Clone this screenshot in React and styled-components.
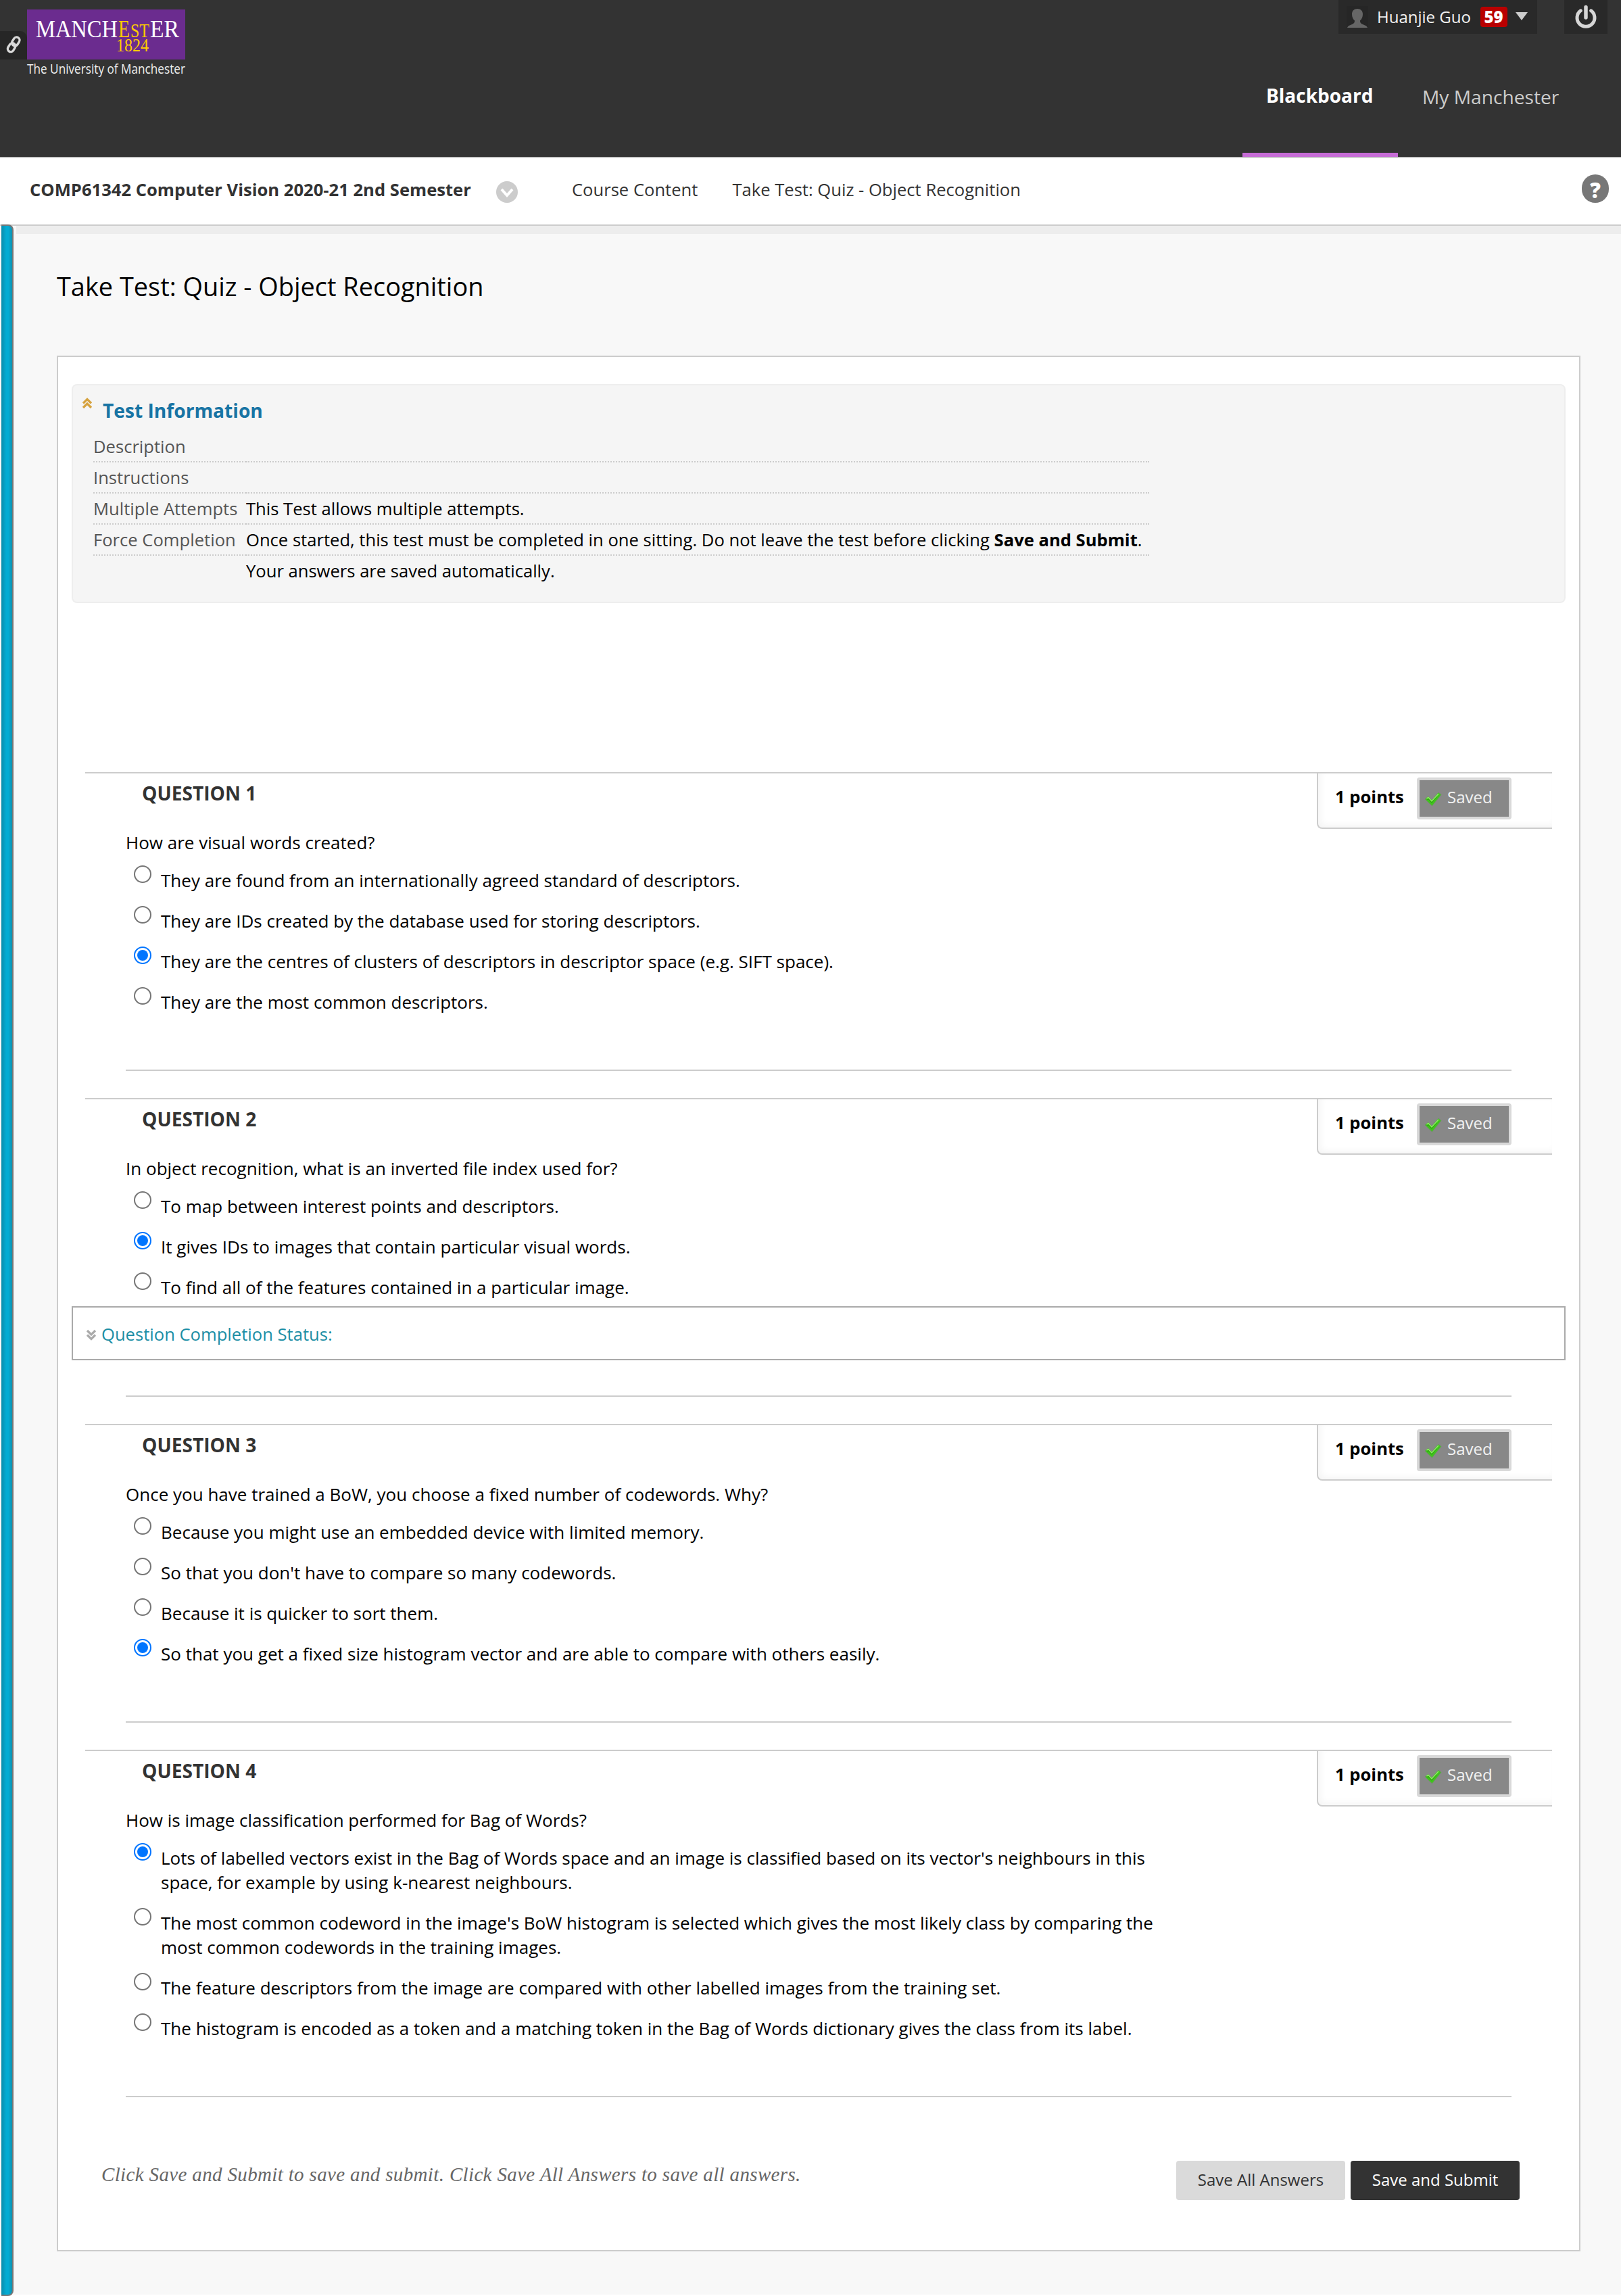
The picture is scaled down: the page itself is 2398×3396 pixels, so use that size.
import React from 'react';
import styled, { createGlobalStyle } from 'styled-components';

const GlobalStyle = createGlobalStyle`
  * { box-sizing: border-box; }
  body {
    margin: 0;
    background: #fff;
    color: #000;
    font-family: "Open Sans", "Noto Sans", sans-serif;
    font-size: 25.6px;
    line-height: 36px;
  }
  svg { display: block; flex: none; }
`;

const Page = styled.div`
  width: 2398px;
  height: 3396px;
  display: flex;
  flex-direction: column;
  overflow: hidden;
`;

/* ---------- global header ---------- */

const Header = styled.header`
  height: 234px;
  display: flex;
  justify-content: space-between;
  background: #333;
  border-bottom: 2px solid #ccc;
`;

const Brand = styled.div`
  display: flex;
  align-items: flex-start;
`;

const LinkTab = styled.div`
  width: 40px;
  height: 42px;
  margin-top: 46px;
  padding: 6px 0 0 8px;
  background: #262626;
  border-top-right-radius: 10px;
`;

const Logo = styled.svg`
  margin-top: 14px;
  overflow: visible;
`;

const HeaderSide = styled.div`
  display: flex;
  flex-direction: column;
  align-items: flex-end;
`;

const Utilities = styled.div`
  display: flex;
  gap: 40px;
  height: 50px;
  margin-right: 20px;
`;

const UserMenu = styled.div`
  display: flex;
  align-items: center;
  width: 294px;
  padding-left: 12px;
  background: #292929;
  color: #f2f2f2;
  font-size: 24px;
`;

const UserName = styled.span`
  width: 147px;
  margin-left: 13px;
  white-space: nowrap;
`;

const Badge = styled.span`
  width: 40px;
  height: 30px;
  margin: 0 11px 0 6px;
  padding-right: 1px;
  border-radius: 4px;
  background: #b90000;
  color: #fff;
  font-weight: 800;
  line-height: 30px;
  text-align: center;
`;

const Caret = styled.svg`
  margin-top: -2px;
`;

const PowerButton = styled.div`
  display: flex;
  justify-content: center;
  width: 64px;
  padding-top: 6px;
  padding-right: 1px;
  background: #292929;
`;

const Nav = styled.nav`
  display: flex;
  height: 182px;
  margin-right: 56px;
`;

const NavTab = styled.a`
  width: ${(p) => (p.$active ? 230 : 274)}px;
  padding: ${(p) => (p.$active ? '73px 0 0 35px' : '75px 0 0 36px')};
  border-bottom: 6px solid ${(p) => (p.$active ? '#c66cd6' : 'transparent')};
  color: ${(p) => (p.$active ? '#fff' : '#ccc')};
  font-size: ${(p) => (p.$active ? 28 : 28.16)}px;
  font-weight: ${(p) => (p.$active ? 700 : 400)};
  white-space: nowrap;
`;

/* ---------- breadcrumbs ---------- */

const Crumbs = styled.div`
  display: flex;
  align-items: flex-start;
  height: 100px;
  padding: 28px 18px 0 44px;
  background: #fff;
  border-bottom: 2px solid #ccc;
  color: #333;
  line-height: 38px;
  white-space: nowrap;
`;

const CourseName = styled.span`
  width: 690px;
  font-weight: 700;
`;

const Crumb = styled.span`
  margin-left: ${(p) => p.$gap}px;
`;

const HelpBadge = styled.span`
  width: 40px;
  height: 42px;
  margin: -4px 0 0 auto;
  border-radius: 20px;
  background: #777;
  color: #fff;
  font-size: 31px;
  font-weight: 800;
  line-height: 46px;
  text-align: center;
`;

/* ---------- page body ---------- */

const Body = styled.main`
  display: flex;
  flex: 1;
  padding: 0 0 2px 2px;
  background: linear-gradient(#f8f8f8, #f8f8f8) no-repeat 0 0 / 100% 3060px;
`;

const CourseMenuEdge = styled.div`
  width: 18px;
  margin-top: -2px;
  margin-bottom: -2px;
  border: 1px solid #777;
  border-width: 2px 2px 2px 0;
  border-radius: 0 8px 8px 0;
  background: linear-gradient(90deg, #0b8cab 0, #04abd3 45%, #04abd3 65%, #1290ae 100%);
`;

const Content = styled.div`
  flex: 1;
  margin-left: 4px;
  padding: 62px 60px 0;
  border-top: 12px solid #ededed;
`;

const Title = styled.h1`
  height: 118px;
  margin: 0;
  font-size: 37.9px;
  font-weight: 400;
  line-height: 30px;
`;

const Panel = styled.section`
  position: relative;
  height: 2804px;
  padding: 40px 20px 0;
  border: 2px solid #ccc;
  background: #fff;
`;

const Info = styled.div`
  height: 324px;
  margin-bottom: 250px;
  padding: 18px 14px 0 13px;
  border: 2px solid #eee;
  border-radius: 8px;
  background: #f5f5f5;
`;

const InfoHeading = styled.div`
  display: flex;
  gap: 15px;
  height: 50px;
  color: #1874a4;
  font-size: 28.16px;
  font-weight: 700;
  line-height: 39px;
`;

const InfoTable = styled.div`
  display: grid;
  grid-template-columns: 226px 1336px;
  margin-left: 17px;
  line-height: 38px;
  white-space: nowrap;
`;

const InfoLabel = styled.div`
  height: 46px;
  padding-top: 4px;
  border-bottom: 2px ${(p) => (p.$last ? 'none' : 'dotted')} #ccc;
  color: #555;
`;

const InfoValue = styled(InfoLabel)`
  color: #000;
`;

const Question = styled.article`
  margin: 0 20px 40px;
  padding: 0 60px;
  border-top: 2px solid #ccc;
`;

const QuestionTop = styled.div`
  display: flex;
  justify-content: space-between;
  height: 84px;
  margin-right: -60px;
`;

const QuestionTitle = styled.h2`
  margin: 11px 0 0 24px;
  color: #333;
  font-size: 28.16px;
  font-weight: 700;
  line-height: 36px;
`;

const Points = styled.div`
  display: flex;
  align-items: flex-start;
  width: 348px;
  height: 82px;
  padding: 6px 0 0 25px;
  border: 2px solid #ccc;
  border-width: 0 0 2px 2px;
  border-radius: 0 0 0 8px;
  box-shadow: inset 4px -4px 10px rgba(0, 0, 0, 0.04);
  font-weight: 700;
  line-height: 58px;
`;

const PointsLabel = styled.span`
  width: 121px;
`;

const SavedButton = styled.button`
  display: flex;
  align-items: center;
  gap: 8px;
  width: 140px;
  height: 62px;
  padding: 0 0 6px 7px;
  border: 4px solid #d9d9d9;
  border-radius: 4px;
  background: #888;
  color: #f2f2f2;
  font: 400 24px "Open Sans", sans-serif;
`;

const Check = styled.svg`
  margin-top: 8px;
`;

const Prompt = styled.p`
  margin: 0;
  height: 52px;
  font-size: 26.02px;
`;

const Options = styled.div`
  display: flex;
  flex-direction: column;
  height: ${(p) => (p.$tall ? 376 : 304)}px;
  padding-bottom: 2px;
  border-bottom: 2px solid #ccc;
  font-size: 26.02px;
`;

const Option = styled.label`
  display: flex;
  align-items: flex-start;
  padding: 0 0 20px 12px;
`;

const Radio = styled.span`
  display: flex;
  flex: none;
  align-items: center;
  justify-content: center;
  width: 26px;
  height: 26px;
  border: 2px solid ${(p) => (p.$checked ? '#0075ff' : '#767676')};
  border-radius: 50%;

  &::after {
    content: "";
    width: 16px;
    height: 16px;
    border-radius: 50%;
    background: ${(p) => (p.$checked ? '#0075ff' : 'transparent')};
  }
`;

const OptionText = styled.span`
  padding: 4px 0 0 14px;
  white-space: pre-line;
`;

const StatusBar = styled.div`
  position: absolute;
  top: 1404px;
  left: 20px;
  right: 20px;
  display: flex;
  align-items: center;
  gap: 7px;
  height: 80px;
  padding: 4px 0 0 19px;
  border: 2px solid #aaa;
  background: #fff;
  color: #1c8ea5;
`;

const Footer = styled.footer`
  display: flex;
  justify-content: space-between;
  padding: 54px 68px 0 44px;
`;

const Hint = styled.p`
  margin: 2px 0 0;
  color: #666;
  font: italic 29px/36px "Liberation Serif", serif;
  letter-spacing: 0.35px;
`;

const Actions = styled.div`
  display: flex;
  gap: 8px;
`;

const Action = styled.button`
  width: 250px;
  height: 58px;
  padding: 0 0 4px;
  border: 0;
  border-radius: 4px;
  background: ${(p) => (p.$primary ? '#333' : '#dadada')};
  color: ${(p) => (p.$primary ? '#fff' : '#333')};
  font: 400 24px "Open Sans", sans-serif;
`;

const LinkIcon = () => (
  <svg width="26" height="28" viewBox="0 0 26 28" fill="none" stroke="#d8d8d8" strokeWidth="3.4">
    <rect x="10.8" y="2.6" width="9" height="13.6" rx="4.5" transform="rotate(32 15.3 9.4)" />
    <rect x="4.6" y="11.4" width="9" height="13.6" rx="4.5" transform="rotate(32 9.1 18.2)" />
  </svg>
);

const Avatar = () => (
  <svg width="32" height="32" viewBox="0 0 32 32">
    <rect width="32" height="32" fill="#262626" />
    <path
      d="M16 4c5 0 8 3 8 8 0 4-1.600 7.500-4 9.500 0 3 1 4.300 4.500 5.700 3 1.200 5.500 2.200 6.500 4.800H1c1-2.600 3.500-3.600 6.500-4.800 3.500-1.400 4.500-2.700 4.500-5.700-2.400-2-4-5.500-4-9.500 0-5 3-8 8-8z"
      fill="#666"
    />
  </svg>
);

const PowerIcon = () => (
  <svg width="34" height="36" viewBox="0 0 34 36" fill="none" stroke="#d6d6d6" strokeLinecap="round">
    <path d="M17 4.500v15.500" strokeWidth="5.500" />
    <path d="M9.300 9.800a13 13 0 1 0 15.400 0" strokeWidth="5" />
  </svg>
);

const DoubleChevron = ({ down, color }) => (
  <svg width="16" height="17" viewBox="0 0 16 17" fill="none" stroke={color} strokeWidth="3.2">
    {down ? <path d="M2 2l6 6 6-6M2 8.500l6 6 6-6" /> : <path d="M2 8.500l6-6 6 6M2 15l6-6 6 6" />}
  </svg>
);

const CheckIcon = () => (
  <Check width="26" height="24" viewBox="0 0 26 24">
    <path d="M1 12l5-4 5 5.500L21 2l4 3.500L11.500 22z" fill="#3fc41c" stroke="#6f9466" strokeWidth="1" />
    <path d="M4 12.500l2-1.500 5 5.500L18 8" fill="none" stroke="#2ea511" strokeWidth="2" />
    <path d="M3.500 11l2.500-1.500 5 5.500L21 4" fill="none" stroke="#8cf060" strokeWidth="1.500" />
  </Check>
);

const UniversityLogo = () => (
  <Logo width="234" height="104" viewBox="0 0 234 104">
    <rect width="234" height="74" fill="#6b2c8f" />
    <g fontFamily="Liberation Serif, serif" fontSize="35" fill="#fff">
      <text x="13" y="40.500" textLength="121" lengthAdjust="spacingAndGlyphs">MANCH</text>
      <text x="135" y="40.500" textLength="17" lengthAdjust="spacingAndGlyphs" fill="#fc0">E</text>
      <text x="153" y="40.500" textLength="28" lengthAdjust="spacingAndGlyphs" fontSize="30" fill="#fc0">ST</text>
      <text x="182" y="40.500" textLength="43" lengthAdjust="spacingAndGlyphs">ER</text>
      <text x="132" y="62" textLength="48" lengthAdjust="spacingAndGlyphs" fontSize="27" fill="#fc0">1824</text>
    </g>
    <text x="0" y="95" textLength="234" lengthAdjust="spacingAndGlyphs" fontFamily="Open Sans, sans-serif" fontSize="20" fill="#eee">
      The University of Manchester
    </text>
  </Logo>
);

const questions = [
  {
    text: 'How are visual words created?',
    options: [
      'They are found from an internationally agreed standard of descriptors.',
      'They are IDs created by the database used for storing descriptors.',
      'They are the centres of clusters of descriptors in descriptor space (e.g. SIFT space).',
      'They are the most common descriptors.',
    ],
    answer: 2,
  },
  {
    text: 'In object recognition, what is an inverted file index used for?',
    options: [
      'To map between interest points and descriptors.',
      'It gives IDs to images that contain particular visual words.',
      'To find all of the features contained in a particular image.',
    ],
    answer: 1,
  },
  {
    text: 'Once you have trained a BoW, you choose a fixed number of codewords. Why?',
    options: [
      'Because you might use an embedded device with limited memory.',
      "So that you don't have to compare so many codewords.",
      'Because it is quicker to sort them.',
      'So that you get a fixed size histogram vector and are able to compare with others easily.',
    ],
    answer: 3,
  },
  {
    text: 'How is image classification performed for Bag of Words?',
    tall: true,
    options: [
      "Lots of labelled vectors exist in the Bag of Words space and an image is classified based on its vector's neighbours in this\nspace, for example by using k-nearest neighbours.",
      "The most common codeword in the image's BoW histogram is selected which gives the most likely class by comparing the\nmost common codewords in the training images.",
      'The feature descriptors from the image are compared with other labelled images from the training set.',
      'The histogram is encoded as a token and a matching token in the Bag of Words dictionary gives the class from its label.',
    ],
    answer: 0,
  },
];

export default function App() {
  return (
    <Page>
      <GlobalStyle />
      <Header>
        <Brand>
          <LinkTab><LinkIcon /></LinkTab>
          <UniversityLogo />
        </Brand>
        <HeaderSide>
          <Utilities>
            <UserMenu>
              <Avatar />
              <UserName>Huanjie Guo</UserName>
              <Badge>59</Badge>
              <Caret width="20" height="14" viewBox="0 0 20 14"><path d="M1 1h18l-9 12z" fill="#ccc" /></Caret>
            </UserMenu>
            <PowerButton><PowerIcon /></PowerButton>
          </Utilities>
          <Nav>
            <NavTab $active>Blackboard</NavTab>
            <NavTab>My Manchester</NavTab>
          </Nav>
        </HeaderSide>
      </Header>

      <Crumbs>
        <CourseName>COMP61342 Computer Vision 2020-21 2nd Semester</CourseName>
        <svg width="32" height="40" viewBox="0 0 32 40">
          <circle cx="16" cy="22" r="16" fill="#ccc" />
          <path d="M8 18l8 9 8-9" fill="none" stroke="#fff" strokeWidth="4" />
        </svg>
        <Crumb $gap={80}>Course Content</Crumb>
        <Crumb $gap={51}>Take Test: Quiz - Object Recognition</Crumb>
        <HelpBadge>?</HelpBadge>
      </Crumbs>

      <Body>
        <CourseMenuEdge />
        <Content>
          <Title>Take Test: Quiz - Object Recognition</Title>
          <Panel>
            <Info>
              <InfoHeading>
                <DoubleChevron color="#d6a23e" />
                Test Information
              </InfoHeading>
              <InfoTable>
                <InfoLabel>Description</InfoLabel>
                <InfoValue />
                <InfoLabel>Instructions</InfoLabel>
                <InfoValue />
                <InfoLabel>Multiple Attempts</InfoLabel>
                <InfoValue>This Test allows multiple attempts.</InfoValue>
                <InfoLabel>Force Completion</InfoLabel>
                <InfoValue>
                  Once started, this test must be completed in one sitting. Do not leave the test before clicking <b>Save and Submit</b>.
                </InfoValue>
                <InfoLabel $last />
                <InfoValue $last>Your answers are saved automatically.</InfoValue>
              </InfoTable>
            </Info>

            {questions.map((q, i) => (
              <Question key={q.text}>
                <QuestionTop>
                  <QuestionTitle>QUESTION {i + 1}</QuestionTitle>
                  <Points>
                    <PointsLabel>1 points</PointsLabel>
                    <SavedButton><CheckIcon />Saved</SavedButton>
                  </Points>
                </QuestionTop>
                <Prompt>{q.text}</Prompt>
                <Options $tall={q.tall}>
                  {q.options.map((option, n) => (
                    <Option key={option}>
                      <Radio $checked={n === q.answer} />
                      <OptionText>{option}</OptionText>
                    </Option>
                  ))}
                </Options>
              </Question>
            ))}

            <Footer>
              <Hint>Click Save and Submit to save and submit. Click Save All Answers to save all answers.</Hint>
              <Actions>
                <Action>Save All Answers</Action>
                <Action $primary>Save and Submit</Action>
              </Actions>
            </Footer>

            <StatusBar>
              <DoubleChevron down color="#aaa" />
              Question Completion Status:
            </StatusBar>
          </Panel>
        </Content>
      </Body>
    </Page>
  );
}
